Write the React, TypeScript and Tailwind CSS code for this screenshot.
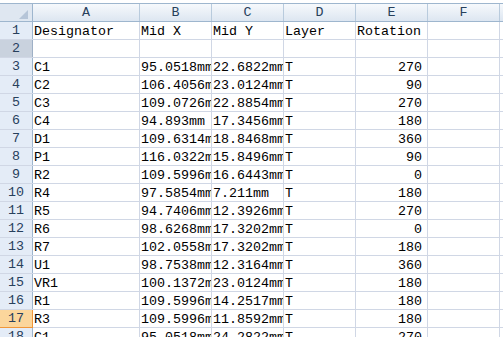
import React from 'react';

const widths = [107, 72, 72, 72, 72, 72];
const letters = ['A', 'B', 'C', 'D', 'E', 'F'];

type Row = [string, string, string, string, string];

const rows: Row[] = [
  ['Designator', 'Mid X', 'Mid Y', 'Layer', 'Rotation'],
  ['', '', '', '', ''],
  ['C1', '95.0518mm', '22.6822mm', 'T', '270'],
  ['C2', '106.4056mm', '23.0124mm', 'T', '90'],
  ['C3', '109.0726mm', '22.8854mm', 'T', '270'],
  ['C4', '94.893mm', '17.3456mm', 'T', '180'],
  ['D1', '109.6314mm', '18.8468mm', 'T', '360'],
  ['P1', '116.0322mm', '15.8496mm', 'T', '90'],
  ['R2', '109.5996mm', '16.6443mm', 'T', '0'],
  ['R4', '97.5854mm', '7.211mm', 'T', '180'],
  ['R5', '94.7406mm', '12.3926mm', 'T', '270'],
  ['R6', '98.6268mm', '17.3202mm', 'T', '0'],
  ['R7', '102.0558mm', '17.3202mm', 'T', '180'],
  ['U1', '98.7538mm', '12.3164mm', 'T', '360'],
  ['VR1', '100.1372mm', '23.0124mm', 'T', '180'],
  ['R1', '109.5996mm', '14.2517mm', 'T', '180'],
  ['R3', '109.5996mm', '11.8592mm', 'T', '180'],
  ['C1', '95.0518mm', '24.2822mm', 'T', '270'],
];

function rowHeaderClass(n: number) {
  if (n === 2) return 'bg-[#c9d2de] border-[#9eb0c6]';
  if (n === 17) return 'bg-[#fbd69c] border-[#f0973a]';
  return 'bg-[#e4ecf7] border-[#9eb6ce]';
}

export default function App() {
  return (
    <div className="w-[503px] h-[337px] overflow-hidden bg-white pt-[3px] font-['Liberation_Mono',monospace] text-[13.33px] leading-[17px] text-black">
      {/* column headers */}
      <div className="flex h-[19px] border-y border-[#9eb6ce] bg-linear-to-b from-[#f6f9fc] to-[#dde6f1]">
        <div className="relative w-[33px] shrink-0 border-r border-[#9eb6ce] bg-[#dfe7f1]">
          <svg className="absolute right-[4px] bottom-[2px]" width="9" height="9" viewBox="0 0 9 9">
            <polygon points="9,0 9,9 0,9" fill="#b6c5d8" />
          </svg>
        </div>
        {letters.map((l, i) => (
          <div
            key={l}
            style={{ width: widths[i] }}
            className="shrink-0 border-r border-[#b9cbdd] text-center text-[#27405c]"
          >
            {l}
          </div>
        ))}
        <div className="flex-1" />
      </div>

      {/* data rows */}
      {rows.map((r, idx) => {
        const n = idx + 1;
        return (
          <div key={n} className="flex h-[18px] border-b border-[#d0d7e5]">
            <div
              className={`w-[33px] shrink-0 border-r text-center text-[#27405c] ${rowHeaderClass(n)} ${
                n === 17 ? '-mb-px border-b' : ''
              }`}
            >
              {n}
            </div>
            {r.map((v, i) => {
              const numeric = i === 4 && n > 1;
              return (
                <div
                  key={i}
                  style={{ width: widths[i] }}
                  className={`shrink-0 overflow-hidden whitespace-nowrap border-r border-[#d0d7e5] pt-px ${
                    numeric ? 'pr-[5px] text-right' : 'pl-[1px]'
                  }`}
                >
                  {v}
                </div>
              );
            })}
            <div className="w-[72px] shrink-0 border-r border-[#d0d7e5]" />
            <div className="flex-1" />
          </div>
        );
      })}
    </div>
  );
}
